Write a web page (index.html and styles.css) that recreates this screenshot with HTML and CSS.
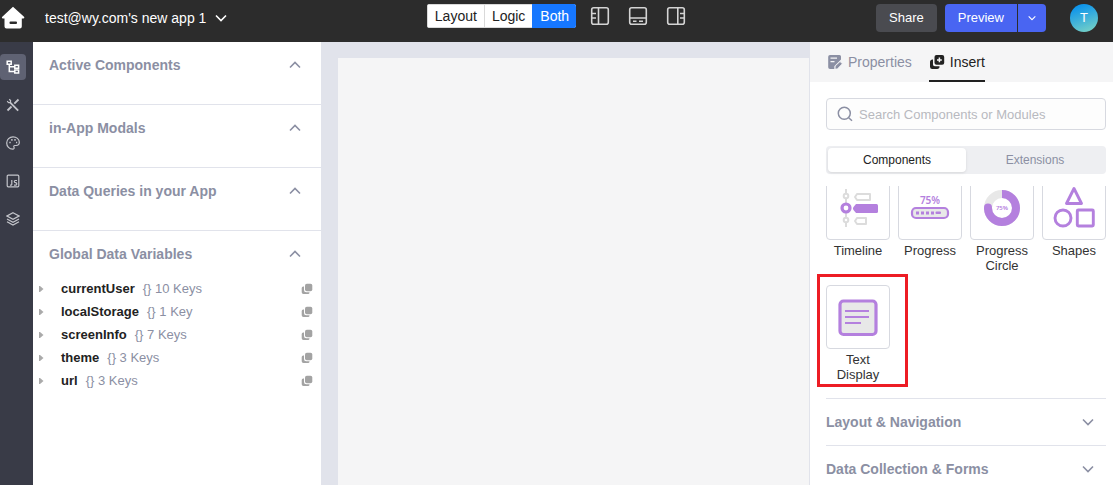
FILE: index.html
```html
<!DOCTYPE html>
<html lang="en">
<head>
<meta charset="utf-8">
<title>App editor</title>
<link rel="stylesheet" href="styles.css">
</head>
<body>
<svg class="defs" aria-hidden="true">
  <symbol id="up" viewBox="0 0 12 8"><path d="M1 6.500 6 1.500l5 5" fill="none" stroke="currentColor" stroke-width="1.600"/></symbol>
  <symbol id="down" viewBox="0 0 12 8"><path d="M1 1.500l5 5 5-5" fill="none" stroke="currentColor" stroke-width="1.600"/></symbol>
  <symbol id="arrow" viewBox="0 0 5 8"><path d="M0 1h1L4.500 4 1 7H0z" fill="currentColor"/></symbol>
  <symbol id="copy" viewBox="0 0 12 12"><path d="M3 3.500v3.500a2.200 2.200 0 0 0 2.200 2.200H8.500v.3a1.500 1.500 0 0 1-1.500 1.500H2.500A1.800 1.800 0 0 1 .7 9.200V5A1.500 1.500 0 0 1 2.200 3.500z" fill="currentColor"/><rect x="4" y="0.700" width="7.300" height="7.600" rx="1.800" fill="currentColor"/></symbol>
</svg>

<header class="topbar">
  <div class="topbar-left">
    <a class="home" href="#" aria-label="Home"><svg width="24" height="24" viewBox="0 0 24 24"><path d="M12 .8 23 10.700c.6.700.300 1.800-.700 1.800H20.800V20.500a2 2 0 0 1-2 2H5.500a2 2 0 0 1-2-2v-8H1.900c-1 0-1.300-1.100-.6-1.800z" fill="#fff"/><rect x="8.500" y="15.500" width="7.500" height="2.600" rx="1" fill="#2c2c2c"/></svg></a>
    <button class="app-name" type="button">test@wy.com's new app 1<svg width="12" height="8"><use href="#down"/></svg></button>
  </div>
  <div class="topbar-center">
    <div class="modes">
      <button type="button">Layout</button><button type="button">Logic</button><button class="active" type="button">Both</button>
    </div>
    <button class="pane" type="button" aria-label="Left panel"><svg width="20" height="20" viewBox="0 0 20 20"><rect x="1.700" y="1.700" width="16.600" height="16.600" rx="2"/><path d="M8.500 2v16M2 7.500h4M2 12h4"/></svg></button>
    <button class="pane" type="button" aria-label="Bottom panel"><svg width="20" height="20" viewBox="0 0 20 20"><rect x="1.700" y="1.700" width="16.600" height="16.600" rx="2"/><path d="M2 12h16M5 15.300h3.500M11 15.300h4"/></svg></button>
    <button class="pane" type="button" aria-label="Right panel"><svg width="20" height="20" viewBox="0 0 20 20"><rect x="1.700" y="1.700" width="16.600" height="16.600" rx="2"/><path d="M11.800 2v16M18 7.500h-4M18 12h-4"/></svg></button>
  </div>
  <div class="topbar-right">
    <button class="share" type="button">Share</button>
    <div class="preview-group">
      <button class="preview" type="button">Preview</button>
      <button class="preview-more" type="button" aria-label="Preview options"><svg width="8" height="6" viewBox="0 0 12 8"><use href="#down"/></svg></button>
    </div>
    <button class="avatar" type="button" aria-label="Account T">T</button>
  </div>
</header>

<main class="workspace">
  <nav class="rail" aria-label="Tools">
    <button class="active" type="button" aria-label="Tree"><svg width="14" height="14" viewBox="0 0 14 14"><path d="M1.200 1.200h4v3h-4zM8.800 5.300h3.800v3H8.800zM8.800 10h3.800v3H8.800zM3.300 4.200v7.400h5.500M3.300 6.800h5.500"/></svg></button>
    <button type="button" aria-label="Settings"><svg width="14" height="14" viewBox="0 0 14 14"><path d="M4 4.300 12.200 12.600M12.500 1.500 8.300 5.700M5.500 8.500 1.500 12.500" stroke-width="1.800"/><path d="M1.200 3.200 2.500 4.600 4.400 4.400 4.600 2.500 3.200 1.200"/></svg></button>
    <button type="button" aria-label="Theme"><svg width="14" height="14" viewBox="0 0 14 14"><path d="M7 .8c3.500 0 6.300 2.400 6.300 5.500 0 2-1.400 3.200-3.200 3.200H8.800c-.9 0-1.300.7-.9 1.500.6 1.200.1 2.200-1.100 2.200C3.300 13.200.700 10.400.700 7S3.500.8 7 .8z"/><path d="M3.300 6.500h1.400M5.200 3.800h1.400M8.300 3.800h1.400M10 6.500h1.200" stroke-width="1.700"/></svg></button>
    <button type="button" aria-label="Scripts"><svg width="14" height="14" viewBox="0 0 14 14"><rect x="1.200" y="1.200" width="11.600" height="11.600" rx="1"/><path d="M5.800 6v4c0 1-.5 1.200-1.800 1.100M11 6.500H9.300c-1.400 0-1.300 2 .2 2.200 1.800.2 1.600 2.400.1 2.400H8"/></svg></button>
    <button type="button" aria-label="Layers"><svg width="14" height="14" viewBox="0 0 14 14"><path d="M7 .8 13 4 7 7.300 1 4zM1 7l6 3.300L13 7M1 9.800l6 3.300 6-3.300"/></svg></button>
  </nav>

  <aside class="explorer">
    <section><button class="head" type="button">Active Components<svg width="12" height="8"><use href="#up"/></svg></button></section>
    <section><button class="head" type="button">in-App Modals<svg width="12" height="8"><use href="#up"/></svg></button></section>
    <section><button class="head" type="button">Data Queries in your App<svg width="12" height="8"><use href="#up"/></svg></button></section>
    <section>
      <button class="head" type="button">Global Data Variables<svg width="12" height="8"><use href="#up"/></svg></button>
      <ul class="vars">
        <li><svg class="caret" width="5" height="8"><use href="#arrow"/></svg><b>currentUser</b><span>{} 10 Keys</span><button type="button" aria-label="Copy currentUser"><svg width="12" height="12"><use href="#copy"/></svg></button></li>
        <li><svg class="caret" width="5" height="8"><use href="#arrow"/></svg><b>localStorage</b><span>{} 1 Key</span><button type="button" aria-label="Copy localStorage"><svg width="12" height="12"><use href="#copy"/></svg></button></li>
        <li><svg class="caret" width="5" height="8"><use href="#arrow"/></svg><b>screenInfo</b><span>{} 7 Keys</span><button type="button" aria-label="Copy screenInfo"><svg width="12" height="12"><use href="#copy"/></svg></button></li>
        <li><svg class="caret" width="5" height="8"><use href="#arrow"/></svg><b>theme</b><span>{} 3 Keys</span><button type="button" aria-label="Copy theme"><svg width="12" height="12"><use href="#copy"/></svg></button></li>
        <li><svg class="caret" width="5" height="8"><use href="#arrow"/></svg><b>url</b><span>{} 3 Keys</span><button type="button" aria-label="Copy url"><svg width="12" height="12"><use href="#copy"/></svg></button></li>
      </ul>
    </section>
  </aside>

  <div class="stage"><div class="canvas"></div></div>

  <aside class="inspector">
    <div class="tabs">
      <button type="button"><svg width="16" height="16" viewBox="0 0 16 16"><path d="M3 1h9.500A1.500 1.500 0 0 1 14 2.500v3L7.500 12v3H3A1.800 1.800 0 0 1 1.200 13.200V2.800A1.800 1.800 0 0 1 3 1z" fill="currentColor"/><path d="M3.500 4.200H10M3.500 7.700h4" stroke="#f5f5f6" stroke-width="1.300"/><path d="m8 15 .2-3L13 7.500l2.300 2.300-5 5.200z" fill="currentColor" stroke="#f5f5f6" stroke-width=".8"/></svg>Properties</button>
      <button class="active" type="button"><svg width="16" height="16" viewBox="0 0 16 16"><path d="M4 5.500v5A1.800 1.800 0 0 0 5.800 12.300H10.500A2.500 2.500 0 0 1 8 15H3.200A2.200 2.200 0 0 1 1 12.800V8a2.500 2.500 0 0 1 3-2.500z" fill="currentColor"/><rect x="5.500" y="1" width="9.700" height="9.800" rx="2" fill="currentColor"/><path d="M10.400 3.500v4.800M8 5.900h4.800" stroke="#f5f5f6" stroke-width="1.500"/></svg>Insert</button>
    </div>
    <div class="tools">
      <label class="search"><svg width="16" height="16" viewBox="0 0 16 16"><circle cx="7.300" cy="7.300" r="6"/><path d="m11.700 11.700 3.300 3"/></svg><input type="text" aria-label="Search" placeholder="Search Components or Modules"></label>
      <div class="switch"><button class="active" type="button">Components</button><button type="button">Extensions</button></div>
    </div>
    <div class="library">
      <div class="tiles">
        <button class="tile" type="button"><span class="art"><svg width="48" height="48" viewBox="0 0 48 48"><g fill="none" stroke="#dcdcdc" stroke-width="2" stroke-linejoin="round"><path d="M12 5v5M12 15v4M12 29v4M12 38v5"/><circle cx="12" cy="12" r="2.300"/><circle cx="12" cy="36" r="2.300"/><path d="M23 10h13v6H23l-2-3zM23 34h9v6H23l-2-3z"/></g><circle cx="12" cy="24" r="4" fill="#fff" stroke="#b480de" stroke-width="3.200"/><path d="M22 20h20.500a1.500 1.500 0 0 1 1.500 1.500v6a1.500 1.500 0 0 1-1.500 1.500H22l-2.500-3c-.7-1-.7-2 0-3z" fill="#b480de"/></svg></span>Timeline</button>
        <button class="tile" type="button"><span class="art"><svg width="48" height="48" viewBox="0 0 48 48"><text class="percent" x="24" y="20" text-anchor="middle">75%</text><rect x="6" y="24" width="36" height="10" rx="4" fill="#e8e8e8" stroke="#b480de" stroke-width="2.200"/><path d="M10 29h3M15 29h3M20 29h3M25 29h3" stroke="#b480de" stroke-width="3"/><rect x="29.500" y="27.500" width="5.500" height="2.500" rx="1" fill="#b480de"/></svg></span>Progress</button>
        <button class="tile" type="button"><span class="art"><svg width="48" height="48" viewBox="0 0 48 48"><circle cx="24" cy="24" r="14" fill="none" stroke="#e8e8e8" stroke-width="8"/><path d="M24 10A14 14 0 1 1 10 24" fill="none" stroke="#b480de" stroke-width="8"/><circle cx="10" cy="23.500" r="4" fill="#b480de"/><text class="percent small" x="24" y="26" text-anchor="middle">75%</text></svg></span>Progress Circle</button>
        <button class="tile" type="button"><span class="art"><svg width="48" height="48" viewBox="0 0 48 48"><g fill="none" stroke="#b480de" stroke-width="2.900" stroke-linejoin="round"><path d="M24 4.500 31.500 19.500H16.500z"/><circle cx="13" cy="34" r="8"/><rect x="27.300" y="26" width="16" height="16" rx="1"/></g></svg></span>Shapes</button>
        <button class="tile marked" type="button"><span class="art"><svg width="48" height="48" viewBox="0 0 48 48"><rect x="6" y="8" width="36" height="33.500" rx="3.500" fill="#e8e8e8" stroke="#b480de" stroke-width="3.200"/><path d="M11 18h24M11 24h24M11 30h16" stroke="#b480de" stroke-width="2"/></svg></span>Text Display</button>
      </div>
      <button class="category" type="button">Layout &amp; Navigation<svg width="12" height="8"><use href="#down"/></svg></button>
      <button class="category" type="button">Data Collection &amp; Forms<svg width="12" height="8"><use href="#down"/></svg></button>
    </div>
  </aside>
</main>
</body>
</html>
```

FILE: styles.css
```css
* { box-sizing: border-box; }

body {
  margin: 0;
  height: 100vh;
  display: flex;
  flex-direction: column;
  overflow: hidden;
  font: 14px/16px "Liberation Sans", Arial, sans-serif;
  color: #222;
  background: #fff;
}

button {
  font: inherit;
  color: inherit;
  border: 0;
  padding: 0;
  background: none;
}

svg { display: block; flex: none; }

.defs { position: absolute; width: 0; height: 0; }

/* Top bar */
.topbar {
  display: grid;
  grid-template-columns: 1fr auto 1fr;
  align-items: start;
  padding: 4px 0 10px;
  background: #2c2c2c;
  color: #fff;
}

.topbar-left, .topbar-center, .topbar-right { display: flex; align-items: center; }
.topbar-left { padding-left: 1px; gap: 20px; height: 28px; }
.app-name { display: flex; align-items: center; gap: 9px; }
.topbar-center { gap: 18px; }

.modes {
  display: flex;
  height: 24px;
  margin-right: -4px;
  border-radius: 3px;
  overflow: hidden;
  background: #fff;
  color: #222;
}

.modes button { padding: 0 7px; border: 1px solid #d9d9d9; border-right: 0; }
.modes .active { background: #1677ff; color: #fff; border-color: #1677ff; }

.pane svg { fill: none; stroke: #d4d4d4; stroke-width: 1.600; }

.topbar-right { justify-content: flex-end; padding-right: 15px; font-size: 13px; }
.topbar-right button { height: 28px; }
.share { padding: 0 13px; margin-right: 8px; border-radius: 4px; background: #4a4b50; }
.preview-group { display: flex; gap: 1px; margin-right: 24px; }
.preview { padding: 0 13px; border-radius: 4px 0 0 4px; background: #4965f2; }
.preview-more { width: 28px; display: grid; place-items: center; border-radius: 0 4px 4px 0; background: #4965f2; }
.avatar { width: 28px; border-radius: 50%; background: linear-gradient(160deg, #0f95ea 15%, #72cfc8 90%); }

/* Workspace columns */
.workspace { flex: 1; min-height: 0; display: flex; }

.rail {
  width: 33px;
  flex: none;
  padding-top: 12px;
  display: flex;
  flex-direction: column;
  gap: 12px;
  background: #393b47;
}

.rail button { width: 26px; height: 26px; display: grid; place-items: center; border-radius: 4px; }
.rail .active { background: #5f6273; }
.rail svg { fill: none; stroke: #c4c5cb; stroke-width: 1.200; }
.rail .active svg { stroke: #fff; stroke-width: 1.500; }

.explorer { width: 288px; flex: none; background: #fff; }
.explorer section { padding-bottom: 16px; border-bottom: 1px solid #e1e3eb; }
.explorer section:last-child { border: 0; }

.head, .category {
  width: 100%;
  height: 46px;
  display: flex;
  align-items: center;
  justify-content: space-between;
  font-weight: bold;
  color: #8b8fa3;
}

.head { padding: 0 20px 0 16px; }

.vars { list-style: none; margin: 0; padding: 0 8px 0 6px; font-size: 13px; }
.vars li { height: 23px; display: flex; align-items: center; color: #8b8fa3; }
.vars b { margin: 0 8px 0 17px; color: #222; }
.vars button { margin-left: auto; color: #a3a3a3; }
.caret { color: #aaa; }

.stage { flex: 1; min-width: 0; padding: 16px 0 0 17px; background: #e1e3eb; }
.canvas { height: 100%; background: #f5f5f6; }

/* Inspector */
.inspector {
  width: 304px;
  flex: none;
  display: flex;
  flex-direction: column;
  border-left: 1px solid #e1e3eb;
  background: #fff;
}

.tabs { display: flex; gap: 17px; padding-left: 17px; background: #f5f5f6; color: #8b8fa3; }
.tabs button { height: 40px; display: flex; align-items: center; gap: 5px; border-bottom: 2px solid transparent; padding-top: 2px; }
.tabs .active { color: #222; border-color: #222; }

.tools { padding: 16px 7px 12px 16px; display: grid; gap: 16px; }

.search {
  display: flex;
  align-items: center;
  gap: 6px;
  height: 32px;
  padding: 0 10px;
  border: 1px solid #d7d9e0;
  border-radius: 4px;
  background: #fdfdfd;
}

.search svg { fill: none; stroke: #8b8fa3; stroke-width: 1.500; }
.search input { flex: 1; min-width: 0; height: 16px; padding: 1px 0 0; border: 0; outline: 0; background: none; font: inherit; font-size: 13px; }
.search input::placeholder { color: #b8b9bf; opacity: 1; }

.switch {
  display: grid;
  grid-template-columns: 1fr 1fr;
  height: 28px;
  padding: 2px;
  border-radius: 4px;
  background: #eeeff2;
  font-size: 12px;
  color: #8b8fa3;
}

.switch .active { border-radius: 4px; background: #fff; color: #222; box-shadow: 0 1px 3px #0000001a; }

.library { flex: 1; min-height: 0; overflow: hidden; padding: 0 7px 0 16px; }

/* Negative margin shows the list in its scrolled position */
.tiles {
  display: grid;
  grid-template-columns: repeat(4, 64px);
  justify-content: space-between;
  gap: 12px 8px;
  margin: -10px 0 16px;
}

.tile {
  position: relative;
  display: flex;
  flex-direction: column;
  align-items: center;
  gap: 3px;
  font-size: 13px;
  line-height: 15px;
  color: #333;
}

.art { width: 64px; height: 64px; display: grid; place-items: center; border: 1px solid #d7d9e0; border-radius: 4px; }
.percent { font: 600 10px "Noto Sans", sans-serif; fill: #b480de; }
.percent.small { font-size: 6px; }

.marked::after { content: ""; position: absolute; inset: -11px -18px -5px -9px; border: 3px solid #ed1c24; }

.category { height: 47px; padding: 0 12px 0 0; border-top: 1px solid #e1e3eb; }
```
